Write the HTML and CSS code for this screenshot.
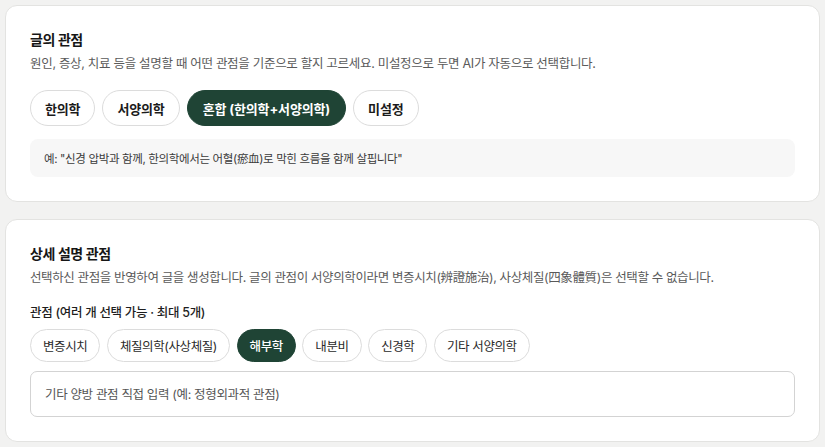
FILE: index.html
```html
<!DOCTYPE html>
<html lang="ko">
<head>
<meta charset="utf-8">
<link rel="stylesheet" href="styles.css">
</head>
<body>
<div class="page">
  <section class="card">
    <h2 class="title">글의 관점</h2>
    <p class="desc">원인, 증상, 치료 등을 설명할 때 어떤 관점을 기준으로 할지 고르세요. 미설정으로 두면 AI가 자동으로 선택합니다.</p>
    <div class="chips chips-lg">
      <button class="chip chip-lg">한의학</button>
      <button class="chip chip-lg">서양의학</button>
      <button class="chip chip-lg active">혼합 (한의학+서양의학)</button>
      <button class="chip chip-lg">미설정</button>
    </div>
    <div class="example">예: "신경 압박과 함께, 한의학에서는 어혈(瘀血)로 막힌 흐름을 함께 살핍니다"</div>
  </section>
  <section class="card">
    <h2 class="title">상세 설명 관점</h2>
    <p class="desc desc-long">선택하신 관점을 반영하여 글을 생성합니다. 글의 관점이 서양의학이라면 변증시치(辨證施治), 사상체질(四象體質)은 선택할 수 없습니다.</p>
    <div class="label">관점 (여러 개 선택 가능 · 최대 5개)</div>
    <div class="chips chips-sm">
      <button class="chip chip-sm">변증시치</button>
      <button class="chip chip-sm">체질의학(사상체질)</button>
      <button class="chip chip-sm active">해부학</button>
      <button class="chip chip-sm">내분비</button>
      <button class="chip chip-sm">신경학</button>
      <button class="chip chip-sm">기타 서양의학</button>
    </div>
    <input class="field" type="text" placeholder="기타 양방 관점 직접 입력 (예: 정형외과적 관점)">
  </section>
</div>
</body>
</html>
```

FILE: styles.css
```css
* { box-sizing: border-box; }
html, body {
  margin: 0;
  padding: 0;
  background: #f2f2f1;
}
body {
  font-family: "Inter", "Noto Sans CJK KR", "Noto Sans", sans-serif;
  color: #1b1b1b;
}
.page {
  width: 820px;
  padding: 5px 0 0 5px;
  display: flex;
  flex-direction: column;
  gap: 17px;
}
.card {
  background: #ffffff;
  border: 1px solid #e3e3e1;
  border-radius: 12px;
  padding: 24px;
  display: flex;
  flex-direction: column;
}
.title {
  margin: 0;
  font-size: 14px;
  line-height: 20px;
  font-weight: 700;
  letter-spacing: -0.4px;
  color: #161616;
}
.desc {
  margin: 5px 0 0;
  font-size: 12.5px;
  line-height: 18px;
  color: #5a5a5a;
  letter-spacing: -0.3px;
}
.desc-long { letter-spacing: -0.38px; }
.chips {
  display: flex;
  flex-wrap: wrap;
}
.chips-lg { margin-top: 17px; gap: 7px; }
.chips-sm { margin-top: 7px; gap: 6.5px; }
.chip {
  font-family: inherit;
  background: #ffffff;
  border: 1px solid #dcdcdc;
  border-radius: 999px;
  color: #1b1b1b;
  cursor: pointer;
  display: flex;
  align-items: center;
}
.chip-lg {
  height: 36px;
  padding: 0 14px;
  font-size: 13px;
  font-weight: 700;
  letter-spacing: -0.15px;
}
.chip-lg.active { padding: 0 15px; }
.chip-sm {
  height: 33px;
  padding: 0 12px;
  font-size: 12.5px;
  font-weight: 400;
  letter-spacing: -0.4px;
  color: #2a2a2a;
}
.chip.active {
  background: #1f4435;
  border-color: #1f4435;
  color: #ffffff;
}
.chip-sm.active { font-weight: 500; }
.example {
  margin-top: 13px;
  height: 38px;
  background: #f7f7f7;
  border-radius: 8px;
  padding: 0 14px;
  display: flex;
  align-items: center;
  font-size: 11.5px;
  letter-spacing: -0.35px;
  color: #3a3a3a;
}
.label {
  margin-top: 17px;
  font-size: 12.5px;
  line-height: 18px;
  font-weight: 500;
  letter-spacing: -0.3px;
  color: #1e1e1e;
}
.field {
  margin-top: 9px;
  height: 46px;
  width: 100%;
  border: 1px solid #d3d3d3;
  border-radius: 7px;
  padding: 0 14px;
  font-family: inherit;
  font-size: 12.5px;
  letter-spacing: -0.35px;
  color: #222;
  background: #fff;
  outline: none;
}
.field::placeholder { color: #555555; }
```
